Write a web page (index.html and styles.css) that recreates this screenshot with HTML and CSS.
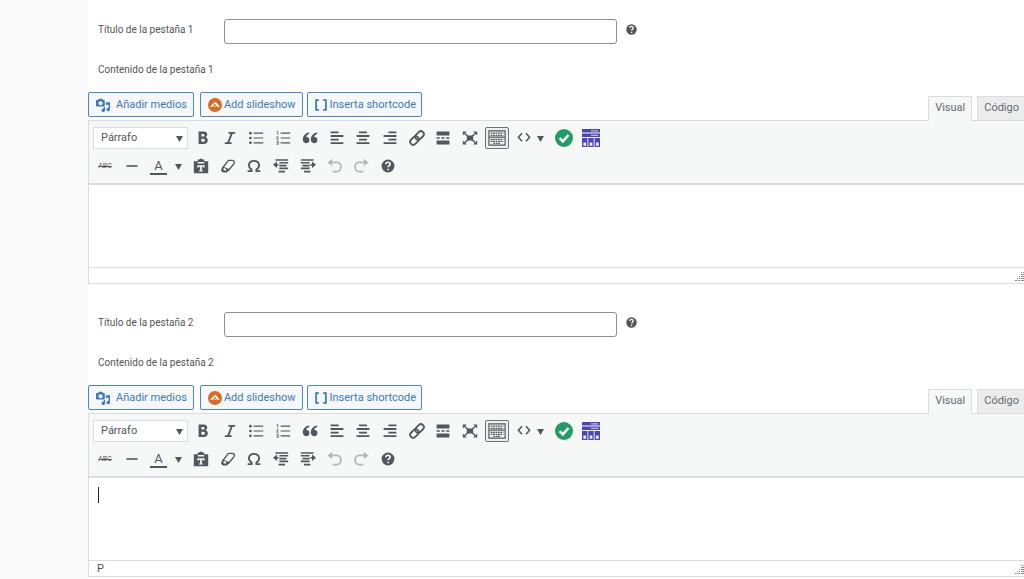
FILE: index.html
```html
<!DOCTYPE html>
<html lang="es">
<head>
<meta charset="utf-8">
<title>Pestañas del producto</title>
<link rel="stylesheet" href="styles.css">
</head>
<body>
<svg class="sprite" aria-hidden="true">
  <symbol id="help" viewBox="0 0 20 20"><circle cx="10" cy="10" r="8" fill="currentColor"/><path d="M7.300 7.800c.2-3.400 5.600-3.200 5.400 0-.1 1.900-2.500 1.900-2.500 3.900M10.200 13.400v2" fill="none" stroke="#fff" stroke-width="2"/></symbol>
  <symbol id="media" viewBox="0 0 20 20"><path fill="currentColor" fill-rule="evenodd" d="M1 3h2l1-2h5l1 2h1.500q1 0 1 1v7q0 1-1 1H1q-1 0-1-1V4q0-1 1-1zm5.500 1.500a3 3 0 1 0 .010 0z"/><path fill="currentColor" d="M14 6h6v10.500a2.500 2.500 0 1 1-2-2.500V9.500h-4zM13 13v4.500a2.500 2.500 0 1 1-2-2.500v-2z"/></symbol>
  <symbol id="slides" viewBox="0 0 20 20"><circle cx="10" cy="10" r="10" fill="#dd6923"/><path d="M3 13 7.500 7.300q2.500-2.500 5 0L17 13h-3.500L12 11l-2 2-2-2-1.500 2z" fill="#fff"/><path d="m7 7 5 5M8 12l3-3" stroke="#dd6923" stroke-width="1.200"/></symbol>
  <symbol id="brackets" viewBox="0 0 20 20"><path d="M7 3H3v14h4M13 3h4v14h-4" fill="none" stroke="currentColor" stroke-width="2.500"/></symbol>
  <symbol id="bold" viewBox="0 0 20 20"><path fill="currentColor" fill-rule="evenodd" d="M4.500 2H11c5 0 5.500 5.800 2.200 7 4.500 1.300 3.500 8.500-2.200 8.500H4.500zM8 5v3.200h2.300c2.200 0 2.200-3.200 0-3.200zM8 11v3.700h2.600c2.500 0 2.500-3.700 0-3.700z"/></symbol>
  <symbol id="italic" viewBox="0 0 20 20"><path d="M8 3.500h8.500M3.500 16.500H12M12.500 3.500l-5 13" fill="none" stroke="currentColor" stroke-width="2.300"/></symbol>
  <symbol id="ul" viewBox="0 0 20 20"><path d="M7 4h12M7 10h12M7 16h12" stroke="currentColor" stroke-width="1.500"/><g fill="currentColor"><circle cx="3" cy="4" r="1.700"/><circle cx="3" cy="10" r="1.700"/><circle cx="3" cy="16" r="1.700"/></g></symbol>
  <symbol id="ol" viewBox="0 0 20 20"><path d="M7 4h12M7 10h12M7 16h12" stroke="currentColor" stroke-width="1.500"/><path d="M2 2h1.500v4M2 8.500h2L2 11.500h2.500M2 14h2v4H2M2 16h2" fill="none" stroke="currentColor"/></symbol>
  <symbol id="quote" viewBox="0 0 20 20"><path fill="currentColor" d="M9 3C4 3.500 1 7.500 1 12c0 6 8.300 6 8.300.500 0-2.800-2-4.100-4-3.800C5.600 7 6.800 5.500 9 5zM19 3c-5 .5-8 4.500-8 9 0 6 8.300 6 8.300.500 0-2.800-2-4.100-4-3.800.3-1.700 1.500-3.200 3.700-3.700z"/></symbol>
  <symbol id="left" viewBox="0 0 20 20"><path d="M2 3h10M2 7.500h16M2 12h10M2 16.500h16" stroke="currentColor" stroke-width="2.200"/></symbol>
  <symbol id="center" viewBox="0 0 20 20"><path d="M5 3h10M2 7.500h16M5 12h10M2 16.500h16" stroke="currentColor" stroke-width="2.200"/></symbol>
  <symbol id="right" viewBox="0 0 20 20"><path d="M8 3h10M2 7.500h16M8 12h10M2 16.500h16" stroke="currentColor" stroke-width="2.200"/></symbol>
  <symbol id="link" viewBox="0 0 20 20"><g transform="rotate(-45 10 10)" fill="none" stroke="currentColor" stroke-width="2.300"><rect x="-.500" y="6.300" width="12" height="7.400" rx="3.700"/><rect x="8.500" y="6.300" width="12" height="7.400" rx="3.700"/></g></symbol>
  <symbol id="more" viewBox="0 0 20 20"><path fill="currentColor" d="M2 2h16v5H2zM2 13h16v5H2zM2 9h4v2H2zM8 9h4v2H8zM14 9h4v2h-4z"/></symbol>
  <symbol id="full" viewBox="0 0 20 20"><path d="m3 4 14 12M17 4 3 16" stroke="currentColor" stroke-width="1.800"/><path fill="currentColor" d="M1 2h5L1 7zM19 2h-5l5 5zM1 18h5l-5-5zM19 18h-5l5-5zM6 7h8v6H6z"/></symbol>
  <symbol id="keys" viewBox="0 0 20 20"><path d="M1 2h18v7H1zM1 9h18v9H1z" fill="none" stroke="currentColor" stroke-width="1.300"/><path d="M3 4.500h14M3 7h14M3 11.500h14M3 13.800h14M6 16h8" stroke="currentColor" stroke-width="1.300" stroke-dasharray="2 .7"/></symbol>
  <symbol id="code" viewBox="0 0 20 20"><path d="M7.500 4 3 9l4.500 5M12.500 4 17 9l-4.500 5" fill="none" stroke="currentColor" stroke-width="1.900"/></symbol>
  <symbol id="check" viewBox="0 0 20 20"><circle cx="10" cy="10" r="10" fill="#219c65"/><path d="m5.200 10.200 3.500 3.500 6.300-7" fill="none" stroke="#fff" stroke-width="2.800"/></symbol>
  <symbol id="table" viewBox="0 0 20 20"><g fill="#4b45b8"><path d="M0 0h20v4H0zM0 5h20v4H0zM0 10h6v10H0zM7 10h6v10H7zM14 10h6v10h-6z"/></g><path d="M10 2h8M10 7h8" stroke="#b9b7e5" stroke-width="1.300"/><path d="M1.500 15h3v3.500h-3zM8.500 15h3v3.500h-3zM15.500 15h3v3.500h-3z" fill="#f1f1fb"/></symbol>
  <symbol id="rule" viewBox="0 0 20 20"><path d="M3 10h14" stroke="currentColor" stroke-width="2"/></symbol>
  <symbol id="paste" viewBox="0 0 20 20"><path fill="currentColor" fill-rule="evenodd" d="M1 4h5V2h2q2-3 4 0h2v2h5v15H1zm5 1v2h8V5zM5.500 9v3h2v-1h1.400v4.500H7.500V17h5v-1.500h-1.400V11h1.400v1h2V9z"/></symbol>
  <symbol id="eraser" viewBox="0 0 20 20"><path d="M10.500 3H16q3 1 1.500 4L11 15q-2 2-5 1.500-4-1.500-2-5z" fill="none" stroke="currentColor" stroke-width="1.700"/><path d="m3.500 10.500 8.500 3.500-3.500 4H4q-4-2-2-5z" fill="currentColor"/><path d="m4.500 13.500 3 1.500" stroke="#f6f7f7" stroke-width="2.500"/></symbol>
  <symbol id="omega" viewBox="0 0 20 20"><path d="M2 16.500h5v-2C1.500 11 3 3.500 10 3.500S18.500 11 13 14.500v2h5" fill="none" stroke="currentColor" stroke-width="2.300"/></symbol>
  <symbol id="outdent" viewBox="0 0 20 20"><path d="M3 2.500h16M8 6h11M8 9.500h9M8 13h11M7 17h8" stroke="currentColor" stroke-width="2"/><path d="M5 4.500 0 8.500l5 4z" fill="currentColor"/><path d="M4 8.500h3" stroke="currentColor" stroke-width="2"/></symbol>
  <symbol id="indent" viewBox="0 0 20 20"><path d="M1 2.500h16M1 6h11M3 9.500h9M1 13h11M5 17h8" stroke="currentColor" stroke-width="2"/><path d="m15 4.500 5 4-5 4z" fill="currentColor"/><path d="M13 8.500h3" stroke="currentColor" stroke-width="2"/></symbol>
  <symbol id="undo" viewBox="0 0 20 20"><path d="M5 5.500h7.500c6.500 0 6.500 11.500 0 11.500H7" fill="none" stroke="currentColor" stroke-width="2.300"/><path d="M6.500 1v9L.500 5.500z" fill="currentColor"/></symbol>
  <symbol id="redo" viewBox="0 0 20 20"><path d="M15 5.500H7.500C1 5.500 1 17 7.500 17H13" fill="none" stroke="currentColor" stroke-width="2.300"/><path d="M13.500 1v9l6-4.500z" fill="currentColor"/></symbol>
  <symbol id="caret" viewBox="0 0 8 8"><path d="M0 1h8L4 8z" fill="currentColor"/></symbol>
  <symbol id="grip" viewBox="0 0 10 10"><path d="M7 1.500h1M9 1.500h1M7 3.500h3M5 5.500h1M7 5.500h3M3 7.500h1M5 7.500h1M7 7.500h3M1 9.500h2M4 9.500h2M7 9.500h3" stroke="#888" stroke-width="1"/></symbol>
</svg>
<main class="panel">
  <section class="tab-section">
    <div class="field">
      <label for="title1">Título de la pestaña 1</label>
      <input id="title1" type="text">
      <svg class="tip"><use href="#help"/></svg>
    </div>
    <p class="caption" id="content1">Contenido de la pestaña 1</p>
    <div class="tools">
      <button class="action media"><svg><use href="#media"/></svg>Añadir medios</button>
      <button class="action"><svg><use href="#slides"/></svg>Add slideshow</button>
      <button class="action short"><svg><use href="#brackets"/></svg>Inserta shortcode</button>
      <div class="modes"><button class="mode active">Visual</button><button class="mode">Código</button></div>
    </div>
    <div class="editor">
      <div class="toolbar">
        <div class="row">
          <div class="format"><select aria-label="Formato"><option>Párrafo</option></select><svg class="caret"><use href="#caret"/></svg></div>
          <div class="group primary">
            <button aria-label="Negrita"><svg><use href="#bold"/></svg></button>
            <button aria-label="Cursiva"><svg><use href="#italic"/></svg></button>
            <button aria-label="Lista"><svg><use href="#ul"/></svg></button>
            <button aria-label="Lista numerada"><svg><use href="#ol"/></svg></button>
            <button aria-label="Cita"><svg><use href="#quote"/></svg></button>
            <button aria-label="Alinear a la izquierda"><svg><use href="#left"/></svg></button>
            <button aria-label="Centrar"><svg><use href="#center"/></svg></button>
            <button aria-label="Alinear a la derecha"><svg><use href="#right"/></svg></button>
            <button aria-label="Enlace"><svg><use href="#link"/></svg></button>
            <button aria-label="Leer más"><svg><use href="#more"/></svg></button>
            <button aria-label="Pantalla completa"><svg><use href="#full"/></svg></button>
            <button class="pressed" aria-label="Barra de herramientas"><svg class="large"><use href="#keys"/></svg></button>
          </div>
          <button class="split code" aria-label="Código"><svg><use href="#code"/></svg><svg class="caret"><use href="#caret"/></svg></button>
          <div class="group extra">
            <button aria-label="Verificar"><svg class="large"><use href="#check"/></svg></button>
            <button aria-label="Tabla"><svg class="large"><use href="#table"/></svg></button>
          </div>
        </div>
        <div class="row">
          <div class="group start">
            <button class="strike"><s>ABC</s></button>
            <button aria-label="Línea horizontal"><svg><use href="#rule"/></svg></button>
          </div>
          <button class="split color" aria-label="Color de texto"><span>A</span><svg class="caret"><use href="#caret"/></svg></button>
          <div class="group secondary">
            <button aria-label="Pegar como texto"><svg><use href="#paste"/></svg></button>
            <button aria-label="Borrar formato"><svg><use href="#eraser"/></svg></button>
            <button aria-label="Carácter especial"><svg><use href="#omega"/></svg></button>
            <button aria-label="Disminuir sangría"><svg><use href="#outdent"/></svg></button>
            <button aria-label="Aumentar sangría"><svg><use href="#indent"/></svg></button>
            <button disabled aria-label="Deshacer"><svg><use href="#undo"/></svg></button>
            <button disabled aria-label="Rehacer"><svg><use href="#redo"/></svg></button>
            <button aria-label="Ayuda"><svg><use href="#help"/></svg></button>
          </div>
        </div>
      </div>
      <div class="canvas" contenteditable="true" role="textbox" aria-labelledby="content1"></div>
      <div class="status"><span></span><svg><use href="#grip"/></svg></div>
    </div>
  </section>
  <section class="tab-section">
    <div class="field">
      <label for="title2">Título de la pestaña 2</label>
      <input id="title2" type="text">
      <svg class="tip"><use href="#help"/></svg>
    </div>
    <p class="caption" id="content2">Contenido de la pestaña 2</p>
    <div class="tools">
      <button class="action media"><svg><use href="#media"/></svg>Añadir medios</button>
      <button class="action"><svg><use href="#slides"/></svg>Add slideshow</button>
      <button class="action short"><svg><use href="#brackets"/></svg>Inserta shortcode</button>
      <div class="modes"><button class="mode active">Visual</button><button class="mode">Código</button></div>
    </div>
    <div class="editor">
      <div class="toolbar">
        <div class="row">
          <div class="format"><select aria-label="Formato"><option>Párrafo</option></select><svg class="caret"><use href="#caret"/></svg></div>
          <div class="group primary">
            <button aria-label="Negrita"><svg><use href="#bold"/></svg></button>
            <button aria-label="Cursiva"><svg><use href="#italic"/></svg></button>
            <button aria-label="Lista"><svg><use href="#ul"/></svg></button>
            <button aria-label="Lista numerada"><svg><use href="#ol"/></svg></button>
            <button aria-label="Cita"><svg><use href="#quote"/></svg></button>
            <button aria-label="Alinear a la izquierda"><svg><use href="#left"/></svg></button>
            <button aria-label="Centrar"><svg><use href="#center"/></svg></button>
            <button aria-label="Alinear a la derecha"><svg><use href="#right"/></svg></button>
            <button aria-label="Enlace"><svg><use href="#link"/></svg></button>
            <button aria-label="Leer más"><svg><use href="#more"/></svg></button>
            <button aria-label="Pantalla completa"><svg><use href="#full"/></svg></button>
            <button class="pressed" aria-label="Barra de herramientas"><svg class="large"><use href="#keys"/></svg></button>
          </div>
          <button class="split code" aria-label="Código"><svg><use href="#code"/></svg><svg class="caret"><use href="#caret"/></svg></button>
          <div class="group extra">
            <button aria-label="Verificar"><svg class="large"><use href="#check"/></svg></button>
            <button aria-label="Tabla"><svg class="large"><use href="#table"/></svg></button>
          </div>
        </div>
        <div class="row">
          <div class="group start">
            <button class="strike"><s>ABC</s></button>
            <button aria-label="Línea horizontal"><svg><use href="#rule"/></svg></button>
          </div>
          <button class="split color" aria-label="Color de texto"><span>A</span><svg class="caret"><use href="#caret"/></svg></button>
          <div class="group secondary">
            <button aria-label="Pegar como texto"><svg><use href="#paste"/></svg></button>
            <button aria-label="Borrar formato"><svg><use href="#eraser"/></svg></button>
            <button aria-label="Carácter especial"><svg><use href="#omega"/></svg></button>
            <button aria-label="Disminuir sangría"><svg><use href="#outdent"/></svg></button>
            <button aria-label="Aumentar sangría"><svg><use href="#indent"/></svg></button>
            <button disabled aria-label="Deshacer"><svg><use href="#undo"/></svg></button>
            <button disabled aria-label="Rehacer"><svg><use href="#redo"/></svg></button>
            <button aria-label="Ayuda"><svg><use href="#help"/></svg></button>
          </div>
        </div>
      </div>
      <div class="canvas" contenteditable="true" role="textbox" aria-labelledby="content2"><span class="cursor"></span></div>
      <div class="status"><span>P</span><svg><use href="#grip"/></svg></div>
    </div>
  </section>
</main>
</body>
</html>
```
FILE: styles.css
```css
* { box-sizing: border-box; }
body {
  margin: 0;
  padding-left: 88px;
  background: #fafafa;
  color: #555;
  font: 11px/16px Roboto, sans-serif;
  overflow-x: hidden;
}
button, input, select { font: inherit; color: inherit; margin: 0; }
button { padding: 0; border: 0; background: none; }
svg { display: block; flex: none; width: 16px; height: 16px; }
.sprite { position: absolute; width: 0; height: 0; }
.panel { background: #fff; }
.tab-section { padding-top: 19px; padding-bottom: 9px; }
.field {
  display: grid;
  grid-template-columns: 126px 393px 24px;
  padding-left: 10px;
  font-size: 10px;
}
.field label { padding-top: 3px; }
.field input {
  height: 25px;
  border: 1px solid #8c8f94;
  border-radius: 3px;
  background: #fff;
}
.tip { width: 13px; height: 13px; margin: 4px 0 0 8px; color: #555; }
.caption { margin: 18px 0 14px; padding-left: 10px; font-size: 10px; }
.tools { display: flex; align-items: flex-start; gap: 4px; }
.action {
  display: flex;
  align-items: center;
  gap: 2px;
  height: 25px;
  padding: 0 6px 0 7px;
  border: 1px solid #4a86c5;
  border-radius: 2px;
  background: #f6f7f7;
  color: #3d7abd;
}
.action svg { width: 14px; height: 14px; }
.media { margin-right: 2px; gap: 6px; }
.short { padding: 0 5px 0 6px; }
.modes { display: flex; align-self: flex-end; gap: 5px; margin-left: auto; margin-top: 4px; }
.mode {
  height: 24px;
  padding: 0 7px 2px;
  border: 1px solid #dcdcde;
  border-bottom: 0;
  background: #ececec;
  color: #646970;
}
.mode:last-child { padding-left: 6px; padding-right: 5px; border-right: 0; }
.mode.active { padding: 0 6px 3px; background: #f6f7f7; margin-bottom: -1px; height: 25px; position: relative; }
.editor { border: 1px solid #dcdcde; border-right: 0; }
.toolbar {
  display: grid;
  gap: 4px;
  padding: 5px 4px;
  border-bottom: 2px solid #dcdcde;
  background: #f6f7f7;
  color: #50575e;
}
.row { display: flex; align-items: center; height: 24px; }
.format { display: grid; align-items: center; width: 95px; margin-right: 3px; }
.format select {
  grid-area: 1 / 1;
  appearance: none;
  width: 100%;
  height: 22px;
  padding: 0 7px;
  border: 1px solid #dcdcde;
  border-radius: 0;
  background: #fff;
}
.format .caret { grid-area: 1 / 1; justify-self: end; margin-right: 5px; pointer-events: none; }
.caret { width: 7px; height: 7px; }
.group { display: flex; justify-content: space-between; }
.group button {
  display: grid;
  place-items: center;
  width: 24px;
  height: 22px;
  border: 1px solid transparent;
  border-radius: 2px;
}
.group button:disabled { color: #b4b9be; }
.group .pressed { border-color: #6b7178; background: #f0f0f1; }
.group .large { width: 18px; height: 18px; }
.primary { width: 318px; }
.split { display: flex; align-items: center; gap: 5px; }
.code { margin: 0 8px 0 7px; }
.extra { width: 51px; }
.start { width: 51px; }
.strike { font-size: 7px; }
.color { gap: 8px; margin: 0 7px 0 6px; }
.color span {
  width: 17px;
  height: 17px;
  border-bottom: 2px solid currentColor;
  font-size: 13px;
  line-height: 16px;
}
.secondary { width: 211px; }
.canvas { height: 82px; padding: 9px; background: #fff; outline: 0; }
.cursor { display: block; width: 1px; height: 16px; background: #222; }
.status {
  display: flex;
  justify-content: space-between;
  align-items: center;
  height: 16px;
  padding-left: 8px;
  border-top: 1px solid #dcdcde;
}
.status svg { width: 10px; height: 10px; align-self: flex-end; margin-bottom: 2px; }
```
